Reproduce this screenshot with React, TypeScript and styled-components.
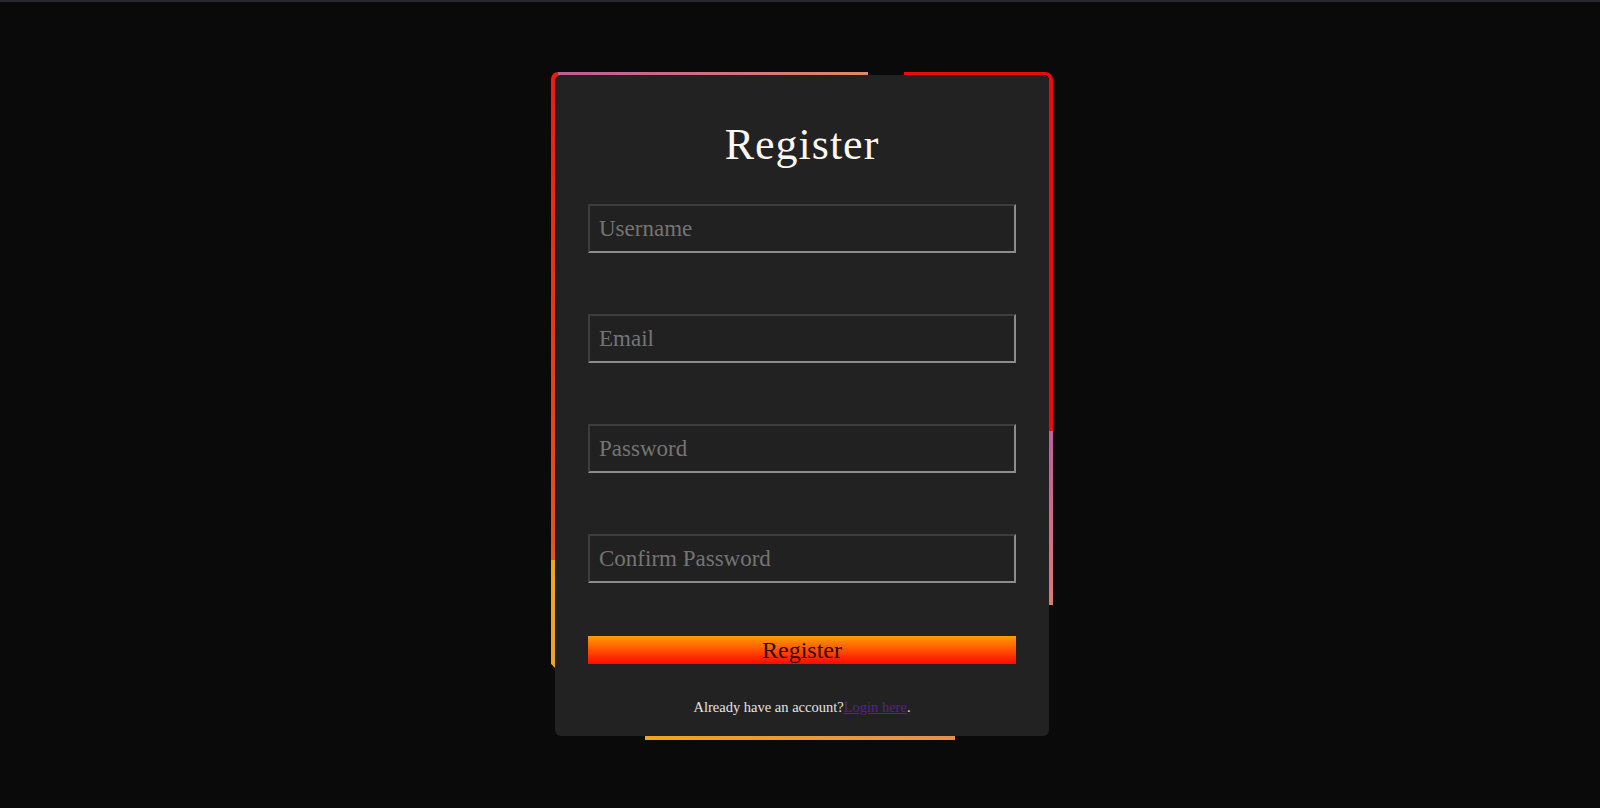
import React from "react";
import styled, { createGlobalStyle } from "styled-components";

const GlobalStyle = createGlobalStyle`
  html, body {
    margin: 0;
    padding: 0;
    background: #0a0a0a;
  }
  body {
    font-family: "Liberation Serif", "DejaVu Serif", serif;
  }
  * {
    box-sizing: border-box;
  }
`;

const fields = ["Username", "Email", "Password", "Confirm Password"];

export default function App() {
  return (
    <>
      <GlobalStyle />
      <Page>
        <TopRule />
        <Stage>
          <Frame>
            {/* glowing border pieces peeking out from behind the card */}
            <LeftGlow />
            <LeftAmber />
            <TopGlow />
            <RightArc />
            <RightGlow />
            <BottomGlow />

            <Card>
              <Title>Register</Title>
              <Form onSubmit={(e) => e.preventDefault()}>
                <Fields>
                  {fields.map((f) => (
                    <Input
                      key={f}
                      type={f.includes("Password") ? "password" : f === "Email" ? "email" : "text"}
                      placeholder={f}
                    />
                  ))}
                </Fields>
                <SubmitButton type="submit">Register</SubmitButton>
              </Form>
              <Footer>
                Already have an account?<FooterLink href="#">Login here</FooterLink>.
              </Footer>
            </Card>
          </Frame>
        </Stage>
      </Page>
    </>
  );
}

const Page = styled.div`
  min-height: 808px;
  display: flex;
  flex-direction: column;
  background: #0a0a0a;
`;

const TopRule = styled.div`
  height: 2px;
  background: #2b2b2f;
`;

const Stage = styled.main`
  display: flex;
  justify-content: center;
  padding: 70px 0 0 4px;
`;

const Frame = styled.div`
  position: relative;
  padding: 3px 4px 4px 4px;
`;

const LeftGlow = styled.span`
  position: absolute;
  left: 0;
  top: 0;
  width: 9px;
  height: 488px;
  border-top-left-radius: 7px;
  background: linear-gradient(to bottom, #ee1a12, #e4561e);
`;

const LeftAmber = styled.span`
  position: absolute;
  left: 0;
  top: 488px;
  width: 4px;
  height: 108px;
  background: linear-gradient(to bottom, #f3a61c, #eda22c);
  clip-path: polygon(0 0, 100% 0, 100% 100%, 0 96%);
`;

const TopGlow = styled.span`
  position: absolute;
  left: 7px;
  top: 0;
  width: 310px;
  height: 3px;
  background: linear-gradient(to right, #bd5c9a, #dc8a68);
`;

const RightArc = styled.span`
  position: absolute;
  right: 0;
  top: 0;
  width: 149px;
  height: 359px;
  border-top: 3px solid #ee0a0a;
  border-right: 4px solid #ee0a0a;
  border-top-right-radius: 8px;
`;

const RightGlow = styled.span`
  position: absolute;
  right: 0;
  top: 359px;
  width: 4px;
  height: 174px;
  background: linear-gradient(to bottom, #bf5f9e, #db7b76);
`;

const BottomGlow = styled.span`
  position: absolute;
  left: 94px;
  bottom: 0;
  width: 310px;
  height: 4px;
  background: linear-gradient(to right, #f3a41a, #e3914e);
`;

const Card = styled.section`
  position: relative;
  width: 494px;
  background: #222222;
  border-radius: 6px;
  padding: 45px 33px 19px;
  display: flex;
  flex-direction: column;
  align-items: stretch;
`;

const Title = styled.h1`
  margin: 0 0 34px;
  font-size: 44px;
  line-height: 50px;
  height: 50px;
  font-weight: 400;
  color: #fbf8f2;
  text-align: center;
  letter-spacing: 1px;
`;

const Form = styled.form`
  display: flex;
  flex-direction: column;
`;

const Fields = styled.div`
  display: flex;
  flex-direction: column;
  gap: 61px;
`;

const Input = styled.input`
  height: 49px;
  width: 100%;
  padding: 0 9px;
  background: #212121;
  border-top: 2px solid #3d3d3d;
  border-left: 2px solid #3d3d3d;
  border-bottom: 2px solid #8c8c8c;
  border-right: 2px solid #8c8c8c;
  border-radius: 0;
  color: #dddddd;
  font-family: "Liberation Serif", "DejaVu Serif", serif;
  font-size: 23px;
  outline: none;

  &::placeholder {
    color: #747474;
  }
`;

const SubmitButton = styled.button`
  margin-top: 53px;
  height: 28px;
  width: 100%;
  border: none;
  padding: 0;
  background: linear-gradient(to bottom, #ff9d00, #ff0800);
  color: #2e0900;
  font-family: "Liberation Serif", "DejaVu Serif", serif;
  font-size: 24px;
  line-height: 28px;
  cursor: pointer;
`;

const Footer = styled.p`
  margin: 33px 0 0;
  font-size: 14.5px;
  line-height: 20px;
  color: #e4e4e4;
  text-align: center;
`;

const FooterLink = styled.a`
  color: #55238b;
  text-decoration: underline;
`;
